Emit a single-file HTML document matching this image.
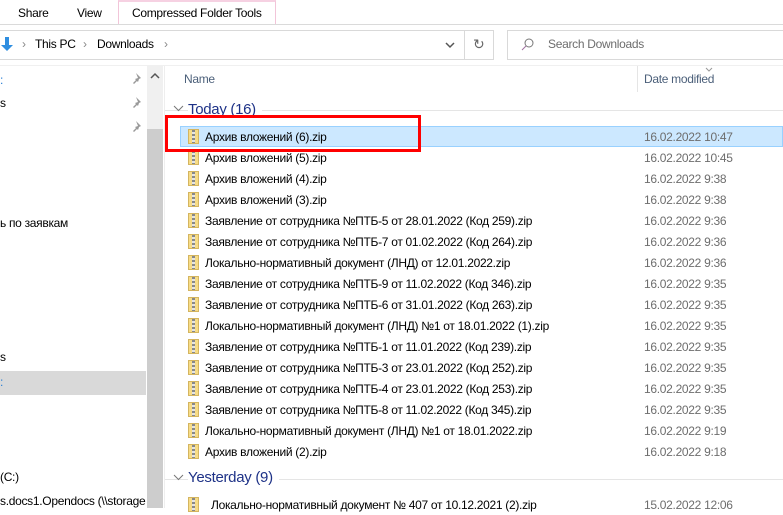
<!DOCTYPE html>
<html><head><meta charset="utf-8"><style>
*{margin:0;padding:0;box-sizing:border-box}
body{width:783px;height:508px;overflow:hidden;background:#fff;font-family:"Segoe UI","Liberation Sans","Noto Sans CJK SC",sans-serif;font-size:12px;color:#000;position:relative;letter-spacing:-0.3px}
.a{position:absolute;white-space:nowrap}
.row{position:absolute;left:180px;width:603px;height:21px}
.row .ic{position:absolute;left:8px;top:3px;width:11px;height:15px;background:#f7dc86;border:1px solid #d4b560}
.row .ic:after{content:"";position:absolute;left:3px;top:0;width:3px;height:13px;background:repeating-linear-gradient(#888 0 2px,#e4e4e4 2px 4px)}
.row .n{position:absolute;left:25px;top:4px}
.row .d{position:absolute;left:464px;top:4px;color:#6d6d6d}
</style></head><body>
<div class="a" style="left:18px;top:6px">Share</div>
<div class="a" style="left:77px;top:6px">View</div>
<div class="a" style="left:118px;top:0;width:158px;height:25px;border:1px solid #f2c5d9;border-bottom:none;border-top:2px solid #f6d1e2"></div>
<div class="a" style="left:132px;top:6px">Compressed Folder Tools</div>
<div class="a" style="left:0;top:24px;width:783px;height:1px;background:#dadada"></div>
<div class="a" style="left:0;top:30px;width:494px;height:30px;border:1px solid #d9d9d9;border-left:none"></div>
<div class="a" style="left:464px;top:30px;width:1px;height:30px;background:#d9d9d9"></div>
<svg class="a" style="left:0;top:36px" width="14" height="16"><path d="M5 1v8H1l6 6 6-6H9V1z" fill="#2f8ee0"/></svg>
<div class="a" style="left:22px;top:37px;color:#888">›</div>
<div class="a" style="left:35px;top:37px">This PC</div>
<div class="a" style="left:83px;top:37px;color:#888">›</div>
<div class="a" style="left:97px;top:37px">Downloads</div>
<div class="a" style="left:164px;top:37px;color:#888">›</div>
<svg class="a" style="left:444px;top:41px" width="12" height="8"><path d="M2 2l4 4 4-4" stroke="#555" stroke-width="1.5" fill="none"/></svg>
<div class="a" style="left:473px;top:36px;color:#666;font-size:14px">↻</div>
<div class="a" style="left:507px;top:30px;width:290px;height:30px;border:1px solid #d9d9d9"></div>
<svg class="a" style="left:521px;top:38px" width="14" height="14"><circle cx="8" cy="5" r="4" stroke="#777" fill="none"/><path d="M5 8L1 12" stroke="#a070a0"/></svg>
<div class="a" style="left:548px;top:37px;color:#6d6d6d">Search Downloads</div>
<div class="a" style="left:0;top:65px;width:783px;height:1px;background:#f0f0f0"></div>
<div class="a" style="left:0;top:73px;color:#2a7fd4">:</div>
<div class="a" style="left:0;top:96px">s</div>
<div class="a" style="left:0;top:216px">ь по заявкам</div>
<div class="a" style="left:0;top:350px">s</div>
<div class="a" style="left:0;top:371px;width:146px;height:24px;background:#d9d9d9"></div>
<div class="a" style="left:0;top:375px;color:#2a7fd4">:</div>
<div class="a" style="left:0;top:470px">(C:)</div>
<div class="a" style="left:0;top:494px">s.docs1.Opendocs (\\storage</div>
<svg class="a" style="left:131px;top:71px" width="12" height="64"><g fill="#999"><path d="M5 2l5 5-2 1-1 3-1-1-3 3-1-1 3-3-1-1 3-1z"/><path d="M5 26l5 5-2 1-1 3-1-1-3 3-1-1 3-3-1-1 3-1z"/><path d="M5 50l5 5-2 1-1 3-1-1-3 3-1-1 3-3-1-1 3-1z"/></g></svg>
<div class="a" style="left:147px;top:66px;width:16px;height:442px;background:#f0f0f0"></div>
<svg class="a" style="left:150px;top:72px" width="10" height="8"><path d="M1 6l4-4 4 4" stroke="#555" stroke-width="1.5" fill="none"/></svg>
<div class="a" style="left:147px;top:129px;width:16px;height:379px;background:#cdcdcd"></div>
<div class="a" style="left:164px;top:66px;width:1px;height:442px;background:#eee"></div>
<div class="a" style="left:184px;top:72px;color:#4c607a">Name</div>
<div class="a" style="left:637px;top:66px;width:1px;height:26px;background:#e5e5e5"></div>
<div class="a" style="left:644px;top:72px;color:#4c607a">Date modified</div>
<svg class="a" style="left:705px;top:67px" width="8" height="5"><path d="M1 1l3 3 3-3" stroke="#999" fill="none"/></svg>
<div class="a" style="left:165px;top:110px;width:618px;height:1px;background:#e5e5e5"></div>
<svg class="a" style="left:173px;top:105px" width="11" height="7"><path d="M1 1l4.5 4.5L10 1" stroke="#777" fill="none"/></svg>
<div class="a" style="left:188px;top:101px;color:#1e3287;font-size:15px;background:#fff;padding-right:6px">Today (16)</div>
<div class="a" style="left:180px;top:126px;width:603px;height:21px;background:#cce8ff;border:1px solid #99d1ff"></div>
<div class="row" style="top:126px"><i class="ic"></i><span class="n">Архив вложений (6).zip</span><span class="d">16.02.2022 10:47</span></div>
<div class="row" style="top:147px"><i class="ic"></i><span class="n">Архив вложений (5).zip</span><span class="d">16.02.2022 10:45</span></div>
<div class="row" style="top:168px"><i class="ic"></i><span class="n">Архив вложений (4).zip</span><span class="d">16.02.2022 9:38</span></div>
<div class="row" style="top:189px"><i class="ic"></i><span class="n">Архив вложений (3).zip</span><span class="d">16.02.2022 9:38</span></div>
<div class="row" style="top:210px"><i class="ic"></i><span class="n">Заявление от сотрудника №ПТБ-5 от 28.01.2022 (Код 259).zip</span><span class="d">16.02.2022 9:36</span></div>
<div class="row" style="top:231px"><i class="ic"></i><span class="n">Заявление от сотрудника №ПТБ-7 от 01.02.2022 (Код 264).zip</span><span class="d">16.02.2022 9:36</span></div>
<div class="row" style="top:252px"><i class="ic"></i><span class="n">Локально-нормативный документ (ЛНД) от 12.01.2022.zip</span><span class="d">16.02.2022 9:36</span></div>
<div class="row" style="top:273px"><i class="ic"></i><span class="n">Заявление от сотрудника №ПТБ-9 от 11.02.2022 (Код 346).zip</span><span class="d">16.02.2022 9:35</span></div>
<div class="row" style="top:294px"><i class="ic"></i><span class="n">Заявление от сотрудника №ПТБ-6 от 31.01.2022 (Код 263).zip</span><span class="d">16.02.2022 9:35</span></div>
<div class="row" style="top:315px"><i class="ic"></i><span class="n">Локально-нормативный документ (ЛНД) №1 от 18.01.2022 (1).zip</span><span class="d">16.02.2022 9:35</span></div>
<div class="row" style="top:336px"><i class="ic"></i><span class="n">Заявление от сотрудника №ПТБ-1 от 11.01.2022 (Код 239).zip</span><span class="d">16.02.2022 9:35</span></div>
<div class="row" style="top:357px"><i class="ic"></i><span class="n">Заявление от сотрудника №ПТБ-3 от 23.01.2022 (Код 252).zip</span><span class="d">16.02.2022 9:35</span></div>
<div class="row" style="top:378px"><i class="ic"></i><span class="n">Заявление от сотрудника №ПТБ-4 от 23.01.2022 (Код 253).zip</span><span class="d">16.02.2022 9:35</span></div>
<div class="row" style="top:399px"><i class="ic"></i><span class="n">Заявление от сотрудника №ПТБ-8 от 11.02.2022 (Код 345).zip</span><span class="d">16.02.2022 9:35</span></div>
<div class="row" style="top:420px"><i class="ic"></i><span class="n">Локально-нормативный документ (ЛНД) №1 от 18.01.2022.zip</span><span class="d">16.02.2022 9:19</span></div>
<div class="row" style="top:441px"><i class="ic"></i><span class="n">Архив вложений (2).zip</span><span class="d">16.02.2022 9:18</span></div>
<div class="a" style="left:165px;top:479px;width:618px;height:1px;background:#e5e5e5"></div>
<svg class="a" style="left:173px;top:474px" width="11" height="7"><path d="M1 1l4.5 4.5L10 1" stroke="#777" fill="none"/></svg>
<div class="a" style="left:188px;top:469px;color:#1e3287;font-size:15px;background:#fff;padding-right:6px">Yesterday (9)</div>
<div class="row" style="top:494px"><i class="ic"></i><span class="n" style="left:31px">Локально-нормативный документ № 407 от 10.12.2021 (2).zip</span><span class="d">15.02.2022 12:06</span></div>
<div class="a" style="left:165px;top:115px;width:256px;height:37px;border:3px solid #f00"></div>
</body></html>
